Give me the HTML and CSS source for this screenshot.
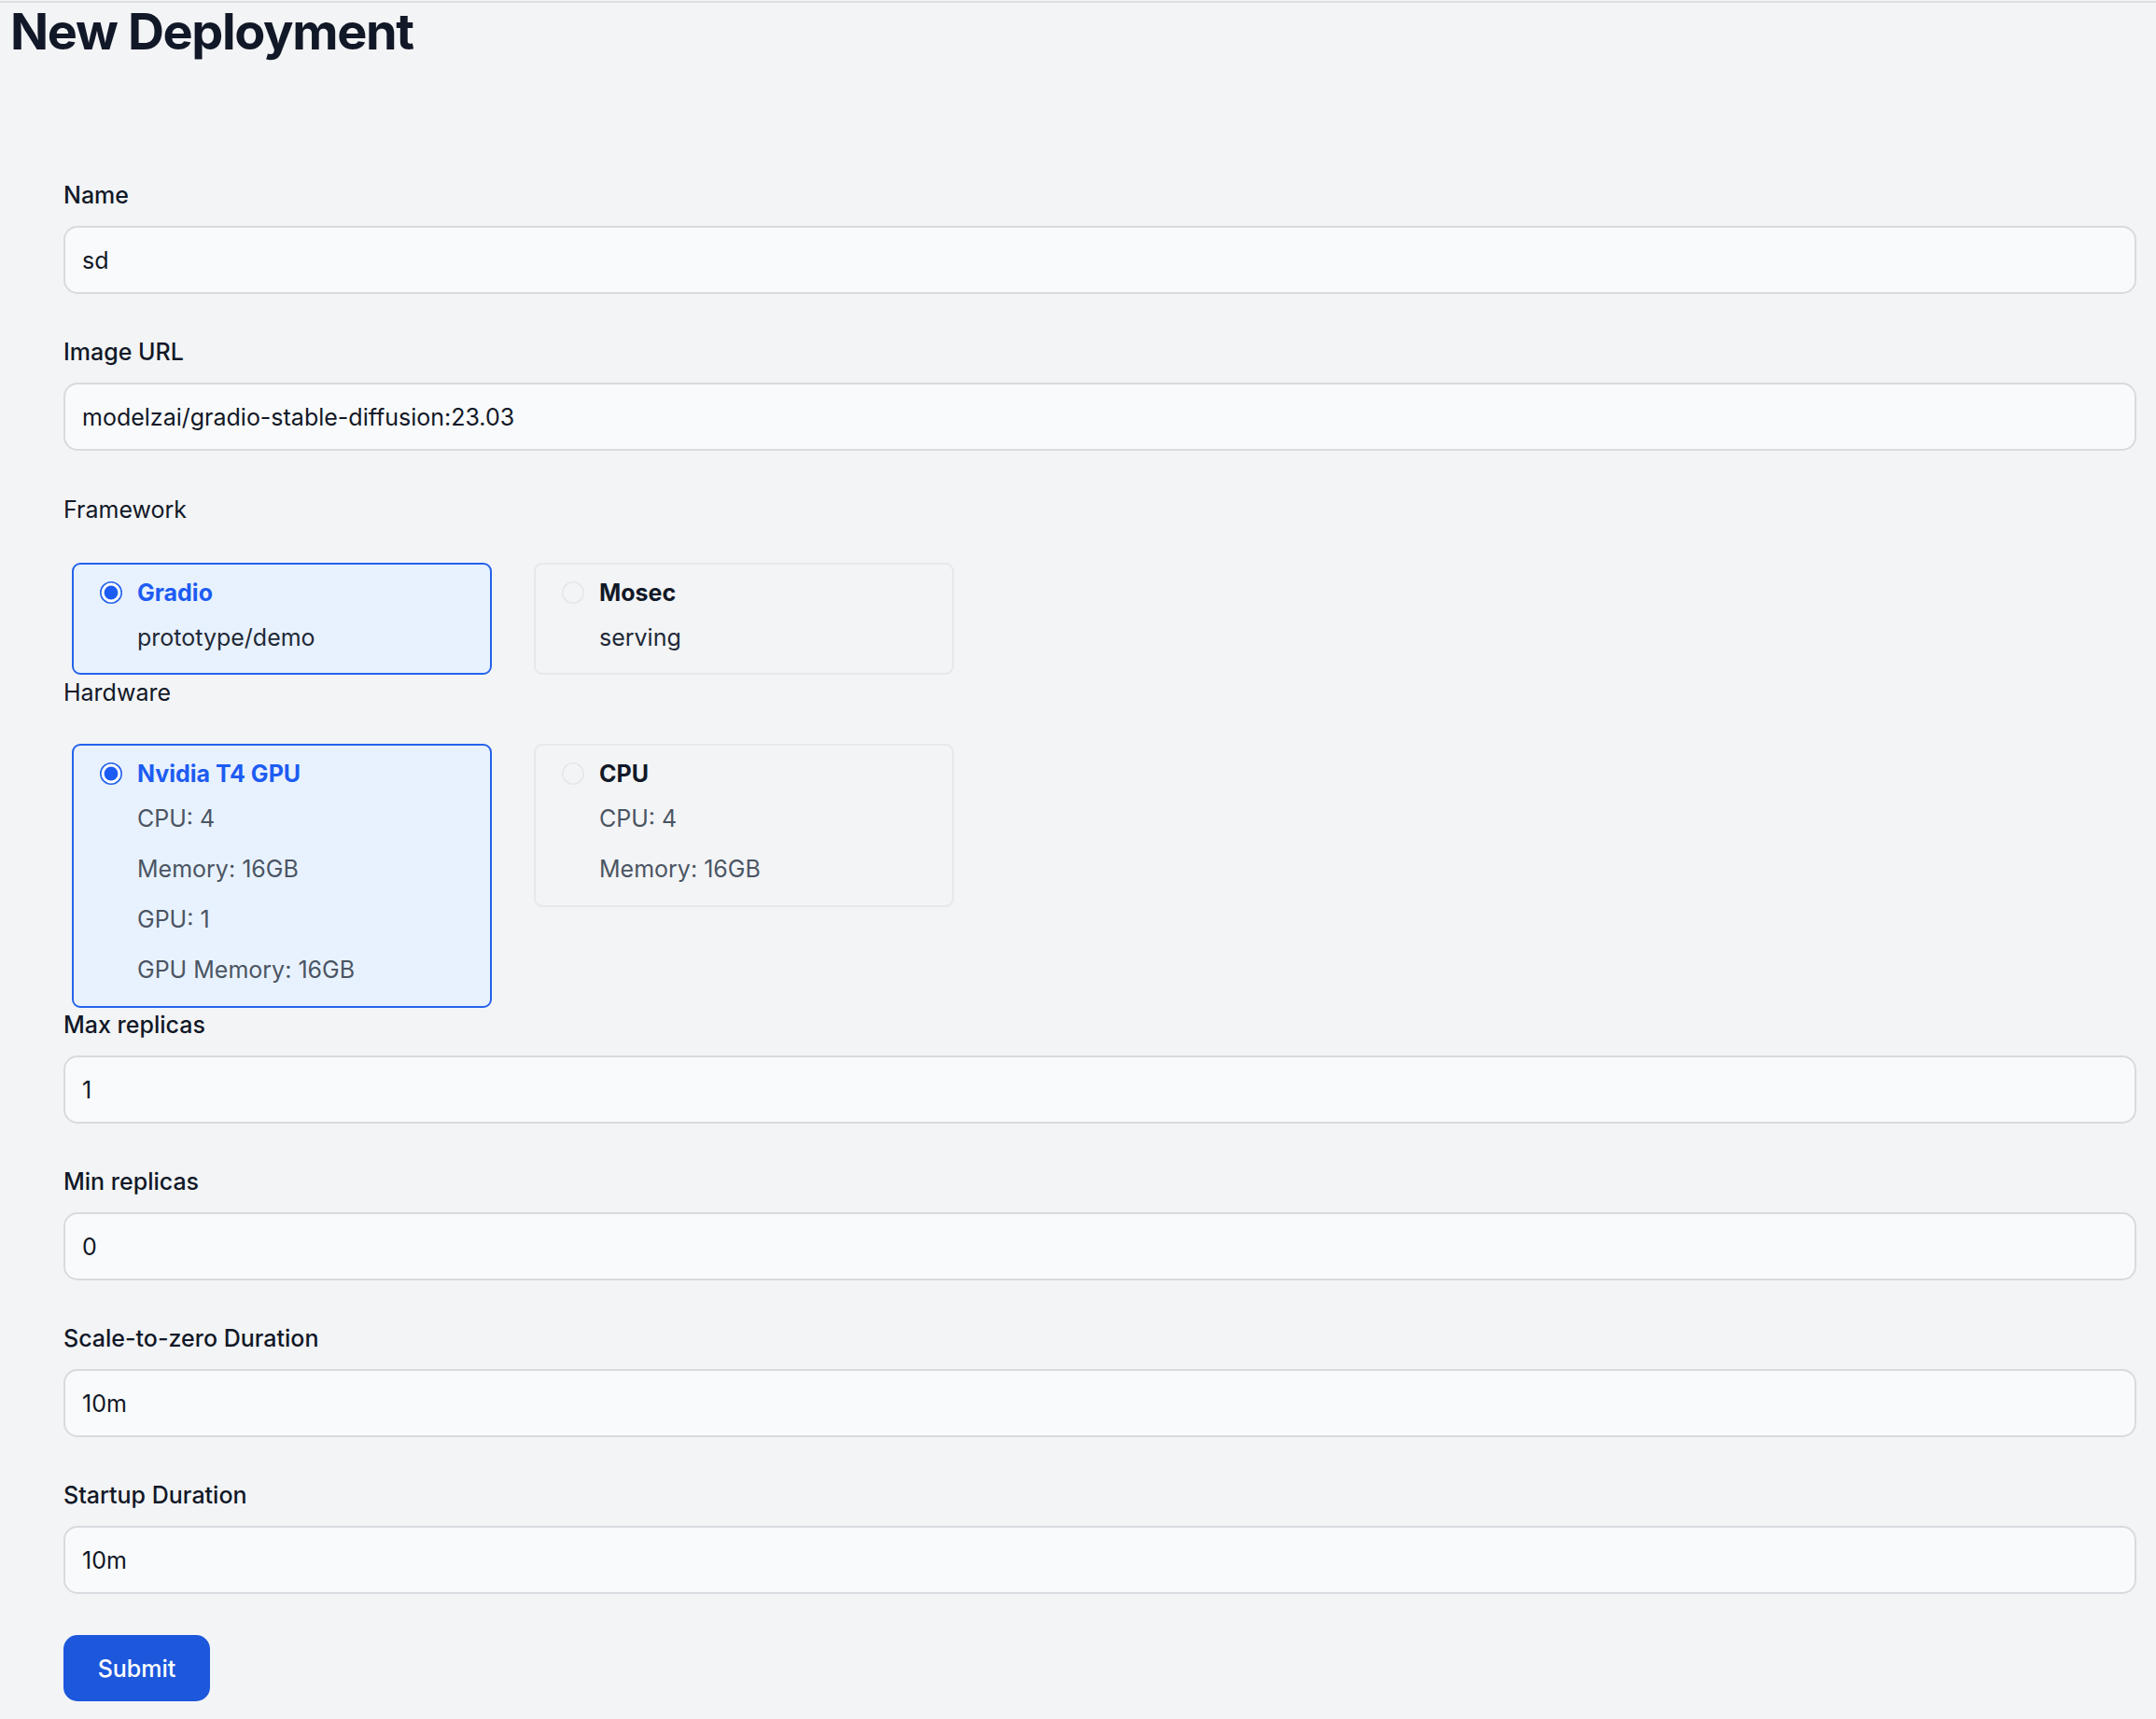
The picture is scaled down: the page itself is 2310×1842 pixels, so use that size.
FILE: index.html
```html
<!DOCTYPE html>
<html lang="en">
<head>
<meta charset="utf-8">
<title>New Deployment</title>
<link rel="stylesheet" href="styles.css">
</head>
<body>
<div class="topline"></div>
<h1 class="title">New Deployment</h1>
<form class="form">
  <div class="field">
    <label class="label" for="name">Name</label>
    <input class="input" id="name" type="text" value="sd">
  </div>
  <div class="field field--last">
    <label class="label" for="image">Image URL</label>
    <input class="input" id="image" type="text" value="modelzai/gradio-stable-diffusion:23.03">
  </div>

  <div class="group-label">Framework</div>
  <div class="options">
    <div class="option option--selected option--compact">
      <div class="option-head">
        <svg class="radio" viewBox="0 0 24 24" width="24" height="24"><circle cx="12" cy="12" r="11.2" fill="#fff" stroke="#2563eb" stroke-width="1.6"/><circle cx="12" cy="12" r="7.4" fill="#1d5cf2"/></svg>
        <span class="option-title">Gradio</span>
      </div>
      <div class="option-lines">
        <div class="option-line option-line--dark">prototype/demo</div>
      </div>
    </div>
    <div class="option option--compact">
      <div class="option-head">
        <svg class="radio" viewBox="0 0 24 24" width="24" height="24"><circle cx="12" cy="12" r="11.2" fill="#f3f4f6" stroke="#e5e7eb" stroke-width="1.6"/></svg>
        <span class="option-title">Mosec</span>
      </div>
      <div class="option-lines">
        <div class="option-line option-line--dark">serving</div>
      </div>
    </div>
  </div>

  <div class="group-label group-label--tight">Hardware</div>
  <div class="options options--tight">
    <div class="option option--selected">
      <div class="option-head">
        <svg class="radio" viewBox="0 0 24 24" width="24" height="24"><circle cx="12" cy="12" r="11.2" fill="#fff" stroke="#2563eb" stroke-width="1.6"/><circle cx="12" cy="12" r="7.4" fill="#1d5cf2"/></svg>
        <span class="option-title">Nvidia T4 GPU</span>
      </div>
      <div class="option-lines">
        <div class="option-line">CPU: 4</div>
        <div class="option-line">Memory: 16GB</div>
        <div class="option-line">GPU: 1</div>
        <div class="option-line">GPU Memory: 16GB</div>
      </div>
    </div>
    <div class="option">
      <div class="option-head">
        <svg class="radio" viewBox="0 0 24 24" width="24" height="24"><circle cx="12" cy="12" r="11.2" fill="#f3f4f6" stroke="#e5e7eb" stroke-width="1.6"/></svg>
        <span class="option-title">CPU</span>
      </div>
      <div class="option-lines">
        <div class="option-line">CPU: 4</div>
        <div class="option-line">Memory: 16GB</div>
      </div>
    </div>
  </div>

  <div class="field">
    <label class="label" for="max">Max replicas</label>
    <input class="input" id="max" type="text" value="1">
  </div>
  <div class="field">
    <label class="label" for="min">Min replicas</label>
    <input class="input" id="min" type="text" value="0">
  </div>
  <div class="field">
    <label class="label" for="scale">Scale-to-zero Duration</label>
    <input class="input" id="scale" type="text" value="10m">
  </div>
  <div class="field">
    <label class="label" for="startup">Startup Duration</label>
    <input class="input" id="startup" type="text" value="10m">
  </div>

  <button class="submit" type="button">Submit</button>
</form>
</body>
</html>
```
FILE: styles.css
```css
* { box-sizing: border-box; }

html, body {
  margin: 0;
  padding: 0;
  background: #f3f4f6;
}

body {
  font-family: "Inter", "Noto Sans", "Liberation Sans", sans-serif;
  color: #111827;
  min-height: 1842px;
}

.topline {
  height: 3px;
  border-top: 1px solid #f3f4f6;
  background: #dcdde1;
}

.title {
  margin: 0;
  padding: 1px 0 0 11px;
  font-size: 54px;
  line-height: 60px;
  font-weight: 700;
  letter-spacing: -0.025em;
  color: #111827;
}

.form {
  margin: 0 21px 0 68px;
  padding-top: 127px;
  display: flex;
  flex-direction: column;
  align-items: flex-start;
}

.field {
  width: 100%;
  display: flex;
  flex-direction: column;
  margin-bottom: 44px;
}

.field--last { margin-bottom: 45px; }

.label {
  font-size: 25px;
  line-height: 36px;
  font-weight: 500;
  color: #111827;
  margin-bottom: 15px;
}

.input {
  width: 100%;
  height: 73px;
  padding: 0 18px;
  font-family: inherit;
  font-size: 25px;
  color: #111827;
  background: #f9fafb;
  border: 2px solid #d8dadf;
  border-radius: 15px;
  outline: none;
}

.group-label {
  font-size: 25px;
  line-height: 36px;
  font-weight: 400;
  color: #111827;
}

.group-label--tight { margin-top: 1px; }

.options {
  display: flex;
  gap: 45px;
  margin: 39px 0 0 9px;
  align-items: flex-start;
}

.options--tight { margin-top: 37px; }

.option {
  width: 450px;
  padding: 12px 0 12px 28px;
  border: 2px solid #e6e8eb;
  border-radius: 9px;
  background: #f3f4f6;
}

.option--compact { padding-bottom: 11px; }

.option--selected {
  background: #e8f2fe;
  border-color: #2563eb;
}

.option-head {
  display: flex;
  align-items: center;
  gap: 16px;
  height: 36px;
}

.radio {
  display: block;
  flex: none;
}

.option-title {
  font-size: 25px;
  line-height: 36px;
  font-weight: 650;
  color: #111827;
}

.option--selected .option-title { color: #1d5cf2; }

.option-lines {
  margin-top: 3px;
  padding-left: 40px;
}

.option-line {
  font-size: 25px;
  line-height: 54px;
  color: #4b5563;
}

.option-line--dark { color: #1f2937; }

.submit {
  margin-top: 0;
  width: 157px;
  height: 71px;
  border: none;
  border-radius: 15px;
  background: #1c57dc;
  color: #ffffff;
  font-family: inherit;
  font-size: 25px;
  font-weight: 500;
  cursor: pointer;
}
```
